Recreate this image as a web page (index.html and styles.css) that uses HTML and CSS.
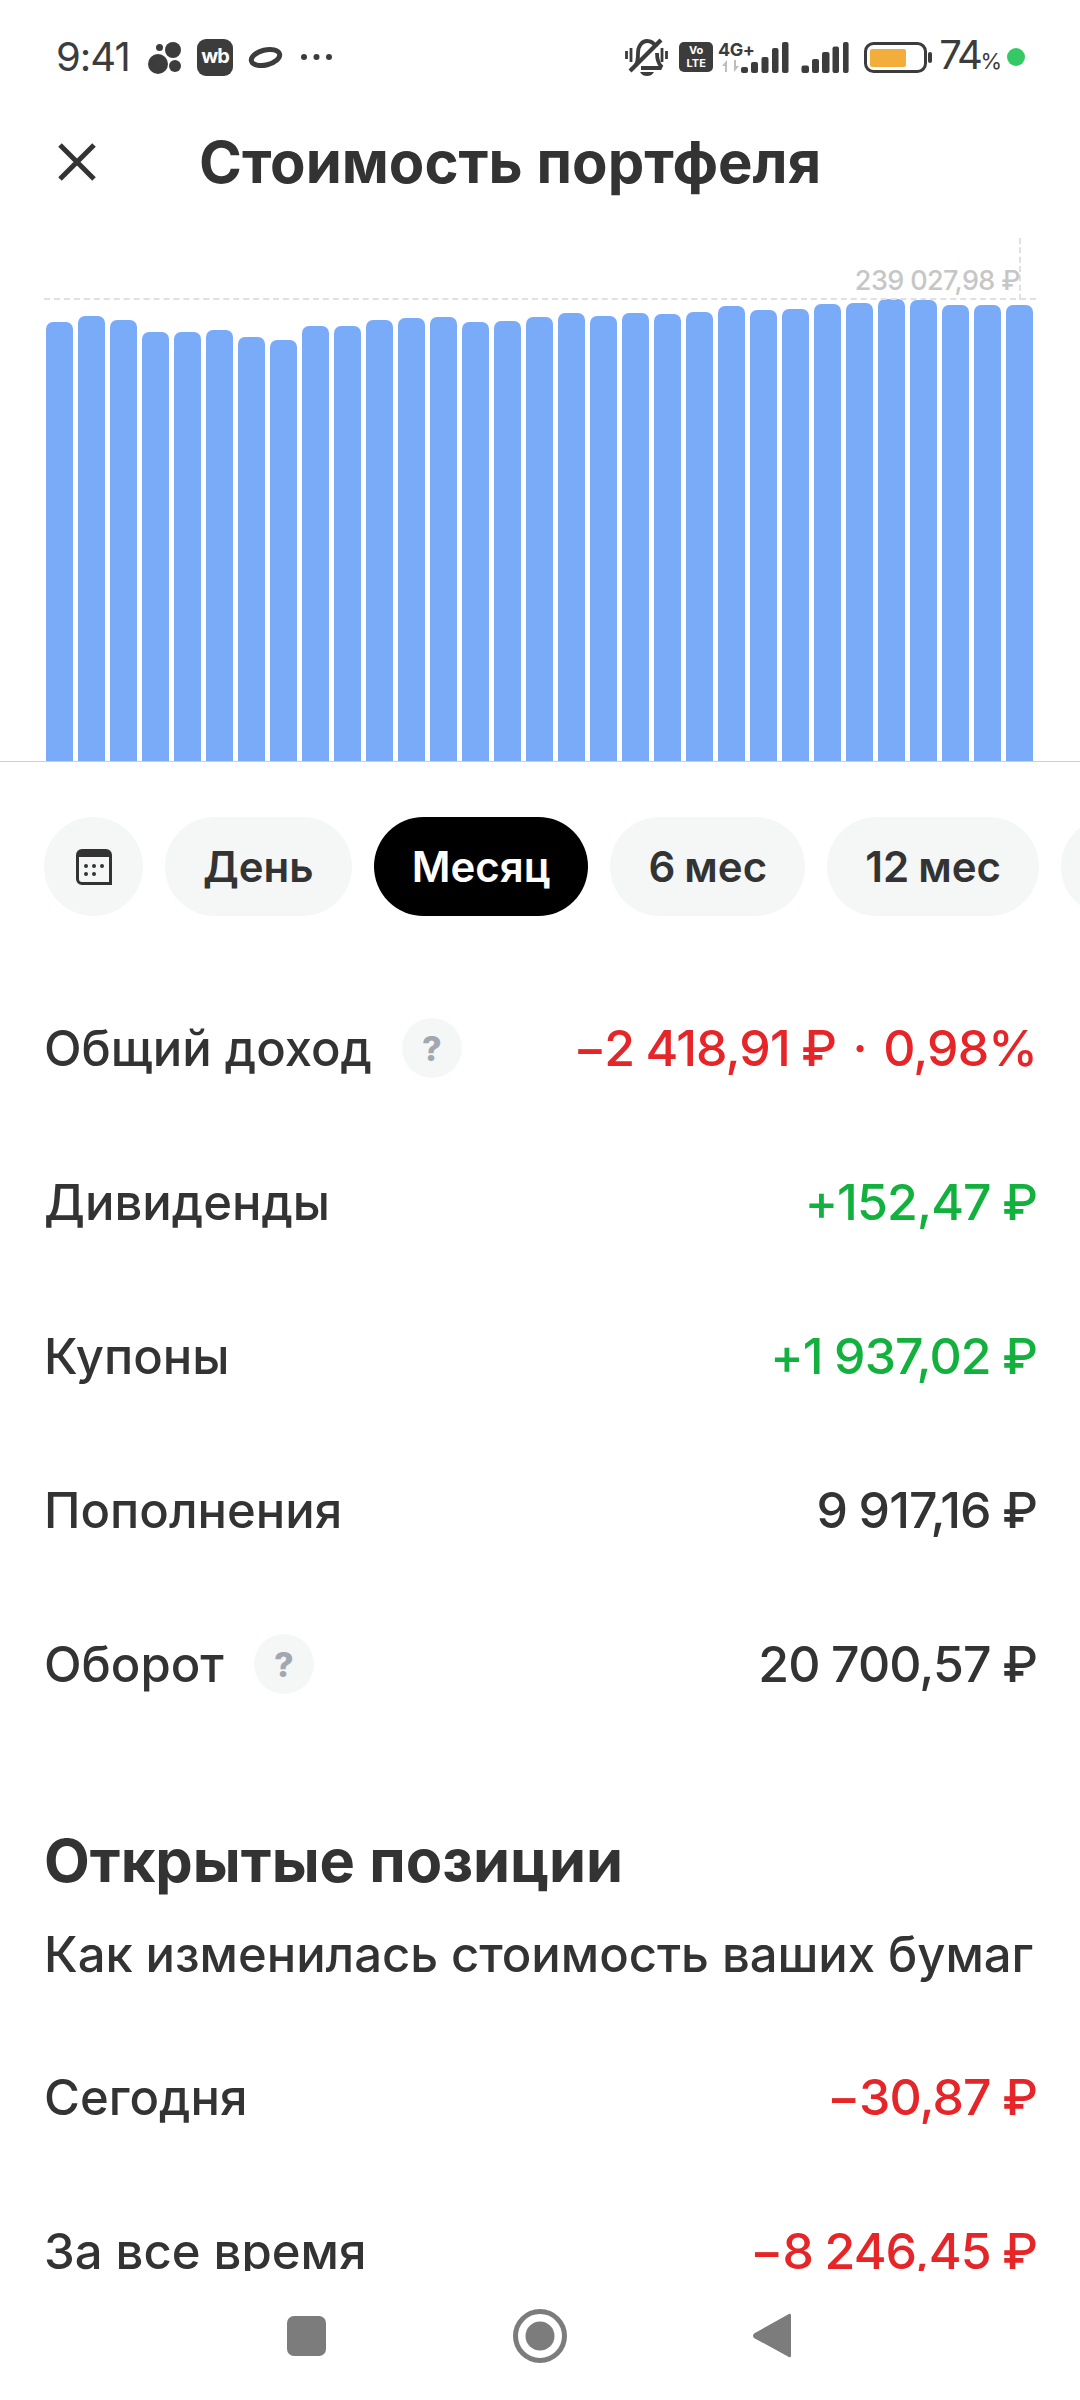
FILE: index.html
```html
<!DOCTYPE html>
<html lang="ru">
<head>
    <meta charset="UTF-8">
    <meta name="viewport" content="width=device-width, initial-scale=1.0">
    <title>Стоимость портфеля</title>
    <link rel="stylesheet" href="styles.css">
</head>
<body>
    <div class="screen">
        <main class="content">
            <div class="status-bar">
                <div class="status-left">
                    <span class="clock">9:41</span>
                    <svg class="ic-dots" width="35" height="33" viewBox="147 40 35 33"><circle cx="158" cy="63" r="10"/><circle cx="173" cy="49" r="8"/><circle cx="175" cy="65" r="6"/><circle cx="159.5" cy="46.5" r="3.5"/></svg>
                    <span class="wb-badge">wb</span>
                    <svg class="ic-ring" width="35" height="25" viewBox="0 0 35 25"><ellipse cx="17.5" cy="12.5" rx="14.5" ry="7.5" transform="rotate(-14 17.5 12.5)"/></svg>
                    <svg class="ic-more" width="32" height="8" viewBox="0 0 32 8"><circle cx="3" cy="4" r="3"/><circle cx="15.5" cy="4" r="3"/><circle cx="28" cy="4" r="3"/></svg>
                </div>
                <div class="status-right">
                    <svg class="ic-mute" width="43" height="40" viewBox="0 0 43 40" fill="none"><path d="M10 29c3-3 3-7 3-13 0-7 4-12 9-12 4 0 7 2 9 6M32 16c0 6 1 10 4 13l-1 2H16" stroke-width="3.8"/><path d="M5 34 36 3" stroke-width="4.200"/><path d="M1.500 14v8M6 11v14M37 11v14M41.500 14v8" stroke-width="2.800"/><path d="M15 35h14c-2 3-4 4-7 4s-5-1-7-4z" class="fill"/></svg>
                    <span class="volte"><span>Vo</span><span>LTE</span></span>
                    <svg class="ic-net" width="71" height="34" viewBox="721 40 71 34"><text x="721" y="56" class="net-label">4G+</text><path class="arrows" d="M725 66l5-6v12h-2v-6zM742 66l-5 6V60h2v6z"/><rect x="744" y="67" width="7" height="6" rx="2"/><rect x="754" y="62" width="7" height="11" rx="2"/><rect x="764.500" y="57" width="7" height="16" rx="2"/><rect x="775" y="48" width="6.500" height="25" rx="2"/><rect x="785" y="42" width="6.500" height="31" rx="2"/></svg>
                    <svg class="ic-signal" width="48" height="32" viewBox="804 41 48 32"><rect x="804.500" y="65.500" width="7.500" height="7.500" rx="2"/><rect x="815" y="59" width="7" height="14" rx="2"/><rect x="825" y="52" width="7.500" height="21" rx="2"/><rect x="835.500" y="46.500" width="6.500" height="26.500" rx="2"/><rect x="846" y="42" width="5.600" height="31" rx="2"/></svg>
                    <svg class="ic-battery" width="68" height="31" viewBox="0 0 68 31"><rect class="batt-frame" x="1.500" y="1.500" width="60" height="28" rx="8"/><rect class="batt-fill" x="6" y="7" width="36" height="18" rx="2"/><rect class="batt-nub" x="64" y="10" width="4" height="11" rx="2"/></svg>
                    <span class="batt-level">74<small>%</small></span>
                    <span class="green-dot"></span>
                </div>
            </div>

            <header class="page-header">
                <svg class="close-icon" width="38" height="38" viewBox="0 0 38 38"><path d="M2 2l34 34M36 2 2 36"/></svg>
                <h1>Стоимость портфеля</h1>
            </header>

            <div class="chart">
                <div class="chart-max-line"></div>
                <div class="chart-cursor"></div>
                <span class="chart-label">239 027,98 ₽</span>
                <div class="bars">
                    <div class="bar" style="height:439px"></div>
                    <div class="bar" style="height:445px"></div>
                    <div class="bar" style="height:441px"></div>
                    <div class="bar" style="height:429px"></div>
                    <div class="bar" style="height:429px"></div>
                    <div class="bar" style="height:431px"></div>
                    <div class="bar" style="height:424px"></div>
                    <div class="bar" style="height:421px"></div>
                    <div class="bar" style="height:435px"></div>
                    <div class="bar" style="height:435px"></div>
                    <div class="bar" style="height:441px"></div>
                    <div class="bar" style="height:443px"></div>
                    <div class="bar" style="height:444px"></div>
                    <div class="bar" style="height:439px"></div>
                    <div class="bar" style="height:440px"></div>
                    <div class="bar" style="height:444px"></div>
                    <div class="bar" style="height:448px"></div>
                    <div class="bar" style="height:445px"></div>
                    <div class="bar" style="height:448px"></div>
                    <div class="bar" style="height:447px"></div>
                    <div class="bar" style="height:449px"></div>
                    <div class="bar" style="height:455px"></div>
                    <div class="bar" style="height:451px"></div>
                    <div class="bar" style="height:452px"></div>
                    <div class="bar" style="height:457px"></div>
                    <div class="bar" style="height:458px"></div>
                    <div class="bar" style="height:462px"></div>
                    <div class="bar" style="height:461px"></div>
                    <div class="bar" style="height:456px"></div>
                    <div class="bar" style="height:456px"></div>
                    <div class="bar" style="height:456px"></div>
                </div>
            </div>

            <div class="periods">
                <div class="pill pill-icon">
                    <svg width="36" height="36" viewBox="0 0 36 36"><path class="cal-frame" d="M1.500 6a4.500 4.500 0 0 1 4.500-4.500h24a4.500 4.500 0 0 1 4.500 4.500v28.500H6A4.500 4.500 0 0 1 1.500 30z"/><path class="cal-top" d="M1 8V6a5 5 0 0 1 5-5h24a5 5 0 0 1 5 5v2z"/><g class="cal-dots"><circle cx="10" cy="17" r="2"/><circle cx="18" cy="17" r="2"/><circle cx="26" cy="17" r="2"/><circle cx="10" cy="25" r="2"/><circle cx="18" cy="25" r="2"/></g></svg>
                </div>
                <div class="pill">День</div>
                <div class="pill active">Месяц</div>
                <div class="pill">6 мес</div>
                <div class="pill">12 мес</div>
                <div class="pill"></div>
            </div>

            <section class="rows">
                <div class="row"><div class="row-name">Общий доход <span class="help">?</span></div><div class="val red">−2 418,91 ₽ <span class="sep">·</span> 0,98%</div></div>
                <div class="row"><div class="row-name">Дивиденды</div><div class="val green">+152,47 ₽</div></div>
                <div class="row"><div class="row-name">Купоны</div><div class="val green">+1 937,02 ₽</div></div>
                <div class="row"><div class="row-name">Пополнения</div><div class="val">9 917,16 ₽</div></div>
                <div class="row"><div class="row-name">Оборот <span class="help">?</span></div><div class="val">20 700,57 ₽</div></div>
            </section>

            <section class="positions">
                <h2>Открытые позиции</h2>
                <p>Как изменилась стоимость ваших бумаг</p>
                <div class="rows">
                    <div class="row"><div class="row-name">Сегодня</div><div class="val red">−30,87 ₽</div></div>
                    <div class="row"><div class="row-name">За все время</div><div class="val red">−8 246,45 ₽</div></div>
                </div>
            </section>
        </main>

        <nav class="nav-bar">
            <svg width="39" height="40" viewBox="0 0 39 40"><rect width="39" height="40" rx="7"/></svg>
            <svg width="54" height="54" viewBox="0 0 54 54"><circle class="nav-ring" cx="27" cy="27" r="24.500"/><circle cx="27" cy="27" r="14.500"/></svg>
            <svg width="38" height="45" viewBox="0 0 38 45"><path d="M35 1.500c1.500-1.500 3-1 3 1v40c0 2-1.500 2.500-3 1L1 25c-1.300-1.500-1.300-3 0-4.500z"/></svg>
        </nav>
    </div>
</body>
</html>
```
FILE: styles.css
```css
* {
    box-sizing: border-box;
}
body {
    margin: 0;
    background: #fff;
    color: #333;
    font-family: Inter, "Noto Sans", sans-serif;
}
.screen {
    width: 1080px;
    height: 2400px;
    display: flex;
    flex-direction: column;
    overflow: hidden;
}
.content {
    height: 2271px;
    overflow: hidden;
    flex-shrink: 0;
}

/* status bar */
.status-bar {
    height: 114px;
    display: flex;
    justify-content: space-between;
    align-items: center;
    padding: 0 55px 0 56px;
    color: #3c3c3c;
}
.status-bar svg {
    fill: #3c3c3c;
    display: block;
}
.status-left,
.status-right {
    display: flex;
    align-items: center;
}
.clock {
    font-size: 40px;
    line-height: 48px;
    width: 91px;
    letter-spacing: -1px;
}
.wb-badge {
    width: 36px;
    height: 37px;
    margin-left: 15px;
    border-radius: 9px;
    background: #3c3c3c;
    color: #fff;
    font-size: 20px;
    font-weight: 700;
    line-height: 35px;
    text-align: center;
    letter-spacing: -1px;
}
.status-bar .ic-ring {
    margin-left: 15px;
    fill: none;
    stroke: #3c3c3c;
    stroke-width: 5;
}
.ic-more {
    margin-left: 18px;
}
.status-bar .ic-mute {
    fill: none;
    stroke: #3c3c3c;
}
.ic-mute .fill {
    fill: #3c3c3c;
    stroke: none;
}
.volte {
    width: 34px;
    height: 30px;
    margin-left: 11px;
    border-radius: 5px;
    background: #3c3c3c;
    color: #fff;
    display: flex;
    flex-direction: column;
    align-items: center;
    justify-content: center;
    font-size: 11px;
    font-weight: 700;
    line-height: 13px;
}
.ic-net {
    margin-left: 5px;
}
.net-label {
    font-family: Inter, sans-serif;
    font-size: 18px;
    font-weight: 700;
    letter-spacing: -0.5px;
}
.arrows {
    fill: #bdbdbd;
}
.ic-signal {
    margin-left: 12px;
}
.ic-battery {
    margin-left: 15px;
}
.status-bar .batt-frame {
    fill: none;
    stroke: #3c3c3c;
    stroke-width: 3;
}
.status-bar .batt-fill {
    fill: #f2ad3a;
}
.batt-level {
    margin-left: 7px;
    font-size: 40px;
    line-height: 48px;
    letter-spacing: -2.500px;
    padding-top: 2px;
}
.batt-level small {
    font-size: 22px;
    margin-left: 0;
    letter-spacing: 0;
}
.green-dot {
    width: 18px;
    height: 18px;
    margin-left: 5px;
    border-radius: 50%;
    background: #35c966;
}

/* header */
.page-header {
    height: 96px;
    display: flex;
    align-items: center;
    padding-left: 58px;
    gap: 103px;
}
.close-icon {
    fill: none;
    stroke: #333;
    stroke-width: 5;
}
.page-header h1 {
    margin: 0;
    font-size: 58px;
    font-weight: 700;
    white-space: nowrap;
}

/* chart */
.chart {
    position: relative;
    height: 524px;
    margin-top: 28px;
    border-bottom: 1px solid #cfcfcf;
    display: flex;
    align-items: flex-end;
}
.bars {
    display: flex;
    align-items: flex-end;
    gap: 5px;
    padding-left: 46px;
}
.bar {
    width: 27px;
    background: #7aabf8;
    border-radius: 7px 7px 0 0;
}
.chart-max-line {
    position: absolute;
    left: 44px;
    right: 44px;
    top: 60px;
    border-top: 2px dashed #e0e0e0;
}
.chart-cursor {
    position: absolute;
    left: 1019px;
    top: 0;
    height: 62px;
    border-left: 2px dashed #e0e0e0;
}
.chart-label {
    position: absolute;
    right: 60px;
    top: 25px;
    font-size: 27px;
    line-height: 36px;
    font-weight: 500;
    letter-spacing: -0.6px;
    color: #c6c6c6;
    white-space: nowrap;
}

/* period pills */
.periods {
    display: flex;
    gap: 22px;
    padding-left: 44px;
    margin-top: 55px;
    overflow: hidden;
}
.pill {
    height: 99px;
    min-width: 99px;
    flex-shrink: 0;
    padding: 0 38px;
    border-radius: 50px;
    background: #f5f7f6;
    display: flex;
    align-items: center;
    justify-content: center;
    font-size: 42px;
    font-weight: 600;
    word-spacing: -1.500px;
    white-space: nowrap;
}
.pill.active {
    background: #000;
    color: #fff;
}
.pill-icon {
    width: 99px;
    padding: 0;
}
.cal-frame {
    fill: #f5f7f6;
    stroke: #333;
    stroke-width: 3;
}
.cal-top,
.cal-dots {
    fill: #333;
}

/* rows */
.rows {
    margin-top: 55px;
}
.row {
    height: 154px;
    display: flex;
    justify-content: space-between;
    align-items: center;
    padding: 0 43px 0 44px;
    font-size: 49px;
    white-space: nowrap;
}
.row-name {
    display: flex;
    align-items: center;
    gap: 30px;
    font-weight: 500;
}
.help {
    width: 60px;
    height: 60px;
    border-radius: 50%;
    background: #f5f7f6;
    color: #a3a7b0;
    font-size: 34px;
    font-weight: 800;
    display: flex;
    align-items: center;
    justify-content: center;
}
.val {
    font-size: 50px;
    font-weight: 500;
    letter-spacing: -0.9px;
    word-spacing: -1px;
}
.red {
    color: #e52528;
}
.green {
    color: #12b13e;
}
.sep {
    padding: 0 5px;
}

/* open positions */
.positions {
    padding-top: 79px;
}
.positions h2 {
    margin: 0;
    padding: 0 44px;
    font-size: 59.500px;
    line-height: 80px;
    font-weight: 700;
}
.positions p {
    margin: 23px 0 0;
    padding: 0 44px;
    font-size: 49px;
    line-height: 64px;
    font-weight: 500;
    letter-spacing: -0.05px;
    white-space: nowrap;
}
.positions .rows {
    margin-top: 33px;
}

/* nav bar */
.nav-bar {
    flex: 1;
    display: flex;
    align-items: center;
    justify-content: space-between;
    padding: 0 289px 0 287px;
}
.nav-bar svg {
    fill: #7c7c7c;
    display: block;
}
.nav-bar .nav-ring {
    fill: none;
    stroke: #7c7c7c;
    stroke-width: 5;
}
```
